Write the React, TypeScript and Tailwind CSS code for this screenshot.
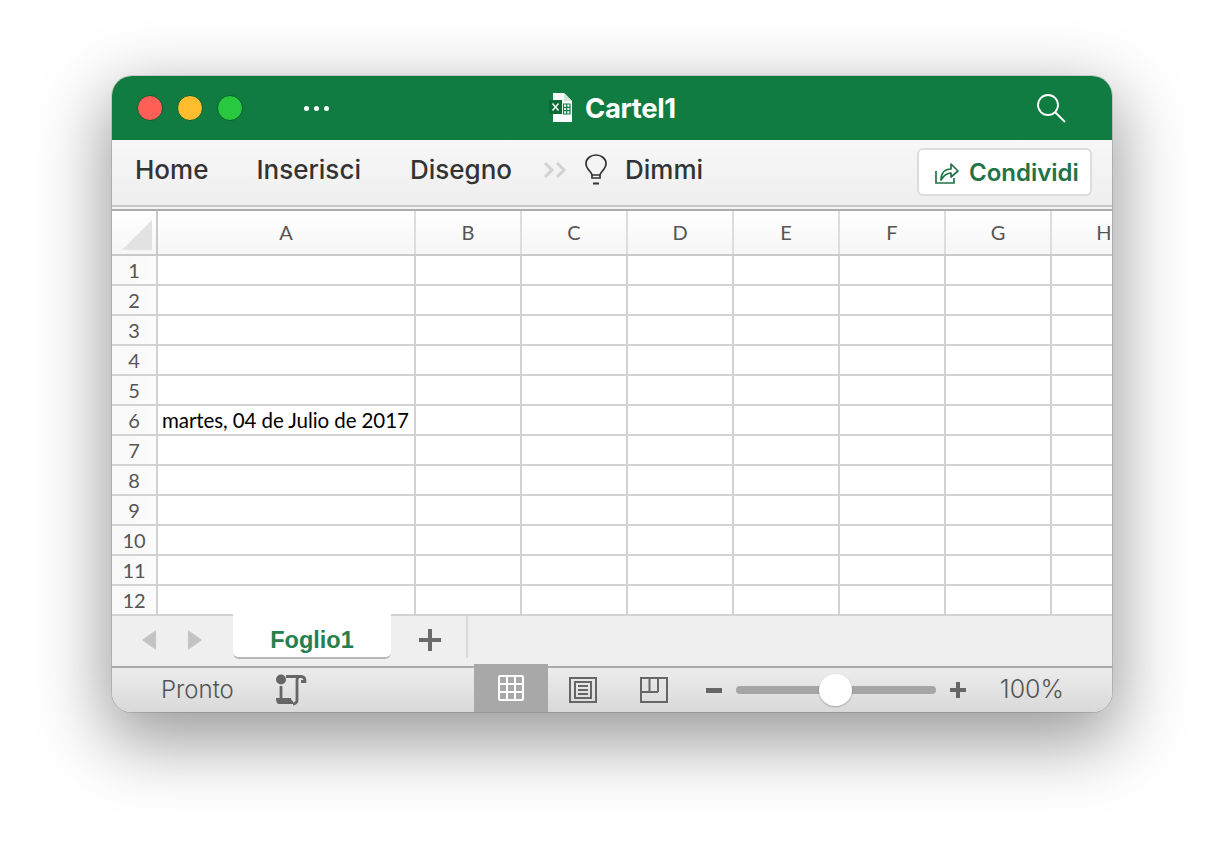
const columns = ['B', 'C', 'D', 'E', 'F', 'G', 'H']
const rows = [1, 2, 3, 4, 5, 6, 7, 8, 9, 10, 11, 12]

function ExcelDoc() {
  return (
    <svg width="26" height="32" viewBox="0 0 26 32">
      <path d="M5 1h11l8 8v21H5z" fill="#fff" />
      <path d="M16 1v8h8z" fill="#cfe3d8" />
      <rect x="1" y="8" width="13" height="14" fill="#0c6a37" />
      <path d="M4.500 11.500l6 7M10.500 11.500l-6 7" stroke="#fff" strokeWidth="1.400" />
      <path d="M15.500 12h6.500v10h-6.500zM15.500 15.300h6.500M15.500 18.600h6.500M18.700 12v10" fill="none" stroke="#107c41" strokeWidth="1.200" />
    </svg>
  )
}

function SearchIcon() {
  return (
    <svg width="30" height="30" viewBox="0 0 30 30" fill="none" stroke="#fff" strokeWidth="1.800">
      <circle cx="12" cy="12" r="10" />
      <path d="M19.500 19.500L28.500 28.500" strokeLinecap="round" />
    </svg>
  )
}

function Bulb() {
  return (
    <svg width="26" height="32" viewBox="0 0 26 32" fill="none" stroke="#333" strokeWidth="1.700">
      <path d="M9 24v-3c0-3-6-5.500-6-11.500a10 8.500 0 0 1 20 0c0 6-6 8.500-6 11.500v3z" />
      <path d="M9 21h8" />
      <path d="M10 29.500h6" strokeWidth="2" />
    </svg>
  )
}

function Chevrons() {
  return (
    <svg width="26" height="18" viewBox="0 0 26 18" fill="none" stroke="#d2d2d2" strokeWidth="3">
      <path d="M2 2l7 7-7 7M14 2l7 7-7 7" />
    </svg>
  )
}

function ShareIcon() {
  return (
    <svg width="26" height="26" viewBox="0 0 26 26" fill="none" stroke="#217346" strokeWidth="1.700">
      <path d="M2 12v12h18v-5" />
      <path d="M7 21c0-7 4-11 10-11V5l7 7-7 6v-4c-4 0-7 2-10 7z" strokeLinejoin="round" />
    </svg>
  )
}

function MacroIcon() {
  return (
    <svg width="32" height="32" viewBox="0 0 32 32" fill="none">
      <circle cx="6" cy="5.500" r="5" fill="#666" />
      <path d="M6 12v12" stroke="#666" strokeWidth="2.800" />
      <path d="M1 24h15c0 1 .5 3 2 3v3H4c-2 0-3-2-3-6z" fill="#666" />
      <path d="M11 2.500h15c2.500 0 4 1.500 4 5h-4M24.500 2.500c-1.500 0-2.500 2-2.500 4v20c0 2-2 3.500-4 3.500" stroke="#666" strokeWidth="2.800" />
    </svg>
  )
}

function GridView() {
  return (
    <svg width="26" height="26" viewBox="0 0 26 26" fill="none" stroke="#fff" strokeWidth="2">
      <rect x="1" y="1" width="24" height="24" rx="1" />
      <path d="M9 1v24M17 1v24M1 9h24M1 17h24" />
    </svg>
  )
}

function PageView() {
  return (
    <svg width="28" height="26" viewBox="0 0 28 26" fill="none" stroke="#666" strokeWidth="2">
      <rect x="1" y="1" width="26" height="24" />
      <rect x="6" y="5" width="16" height="16" />
      <path d="M9 9h10M9 13h10M9 17h10" />
    </svg>
  )
}

function BreakView() {
  return (
    <svg width="28" height="26" viewBox="0 0 28 26" fill="none" stroke="#666" strokeWidth="2">
      <rect x="1" y="1" width="26" height="24" />
      <path d="M1 15h17M9.500 1v14M18 1v14" />
    </svg>
  )
}

export default function App() {
  return (
    <div className="min-h-[860px] bg-white pt-[76px] pl-[112px]">
      <div className="flex h-[636px] w-[1000px] flex-col overflow-hidden rounded-[20px] bg-white font-['Inter',sans-serif] shadow-[0_0_0_1px_rgba(0,0,0,0.12),0_24px_70px_6px_rgba(0,0,0,0.4)]">
        {/* Title bar */}
        <div className="relative flex h-[64px] shrink-0 items-center bg-[#107c41] pl-[25px] pr-[46px]">
          <div className="flex gap-[14px]">
            <span className="h-[26px] w-[26px] rounded-full border border-[#0b5f31] bg-[#ff5f57]" />
            <span className="h-[26px] w-[26px] rounded-full border border-[#0b5f31] bg-[#febc2e]" />
            <span className="h-[26px] w-[26px] rounded-full border border-[#0b5f31] bg-[#28c840]" />
          </div>
          <div className="ml-[61px] flex gap-[5px]">
            <span className="h-[5px] w-[5px] rounded-full bg-white" />
            <span className="h-[5px] w-[5px] rounded-full bg-white" />
            <span className="h-[5px] w-[5px] rounded-full bg-white" />
          </div>
          <div className="ml-[219px] flex items-center gap-[11px]">
            <ExcelDoc />
            <span className="mt-[1px] text-[27.500px] font-bold tracking-[-0.4px] text-white">Cartel1</span>
          </div>
          <div className="ml-auto flex">
            <SearchIcon />
          </div>
        </div>

        {/* Toolbar */}
        <div className="flex h-[65px] shrink-0 items-center bg-gradient-to-b from-[#f7f7f7] to-[#eeeeee] pl-[23px] pr-[20px] text-[26px] font-medium text-[#333]">
          <span className="mb-[7px]">Home</span>
          <span className="mb-[7px] ml-[48px]">Inserisci</span>
          <span className="mb-[7px] ml-[49px]">Disegno</span>
          <span className="mb-[6px] ml-[31px] flex">
            <Chevrons />
          </span>
          <span className="mb-[6px] ml-[14px] flex">
            <Bulb />
          </span>
          <span className="mb-[7px] ml-[16px]">Dimmi</span>
          <button className="mb-[2px] ml-auto flex h-[48px] w-[175px] items-center rounded-[6px] border-2 border-[#dcdcdc] bg-white pl-[15px] text-[24px] font-semibold text-[#217346]">
            <ShareIcon />
            <span className="ml-[9px] mt-[2px]">Condividi</span>
          </button>
        </div>
        <div className="h-[2px] shrink-0 bg-[#c8c8c8]" />
        <div className="h-[2px] shrink-0 bg-[#f4f4f4]" />
        <div className="h-[2px] shrink-0 bg-[#acacac]" />

        {/* Sheet */}
        <div className="flex h-[405px] shrink-0 flex-col overflow-hidden font-['Lato',sans-serif]">
          <div className="flex h-[45px] shrink-0 border-b-2 border-[#c9c9c9] bg-gradient-to-b from-white to-[#f6f6f6] text-[20px] text-[#555]">
            <div className="flex h-full w-[46px] shrink-0 items-center justify-center border-r-2 border-[#c9c9c9]">
              <div className="mt-[5px] ml-[6px] h-[30px] w-[30px] bg-[#e2e2e2] [clip-path:polygon(100%_0,100%_100%,0_100%)]" />
            </div>
            <div className="flex h-full w-[258px] shrink-0 items-center justify-center border-r-2 border-[#dddddd] pb-[2px]">A</div>
            {columns.map((c) => (
              <div key={c} className="flex h-full w-[106px] shrink-0 items-center justify-center border-r-2 border-[#dddddd] pb-[2px]">
                {c}
              </div>
            ))}
          </div>
          {rows.map((r) => (
            <div key={r} className="flex h-[30px] shrink-0">
              <div className="flex h-full w-[46px] shrink-0 items-center justify-center border-r-2 border-b-2 border-[#d2d2d2] bg-gradient-to-r from-[#f8f8f8] to-[#fcfcfc] text-[20px] text-[#555]">
                {r}
              </div>
              <div className="flex h-full w-[258px] shrink-0 items-center overflow-hidden whitespace-nowrap border-r-2 border-b-2 border-[#d2d2d2] pl-[4px] text-[20.500px] tracking-[-0.08px] text-black">
                {r === 6 ? 'martes, 04 de Julio de 2017' : ''}
              </div>
              {columns.map((c) => (
                <div key={c} className="h-full w-[106px] shrink-0 border-r-2 border-b-2 border-[#d2d2d2]" />
              ))}
            </div>
          ))}
        </div>

        {/* Sheet tabs */}
        <div className="flex h-[50px] shrink-0 items-start bg-[#efefef]">
          <div className="flex h-[48px] w-[121px] shrink-0 items-center gap-[32px] pl-[30px]">
            <span className="h-0 w-0 border-y-[10px] border-r-[14px] border-y-transparent border-r-[#c4c4c4]" />
            <span className="h-0 w-0 border-y-[10px] border-l-[14px] border-y-transparent border-l-[#c4c4c4]" />
          </div>
          <div className="relative mt-[-2px] flex h-[45px] w-[158px] shrink-0 items-center justify-center rounded-b-[6px] border-b-2 border-[#b8b8b8] bg-white pt-[10px] font-['Liberation_Sans',sans-serif] text-[23.500px] font-bold text-[#24804f]">
            Foglio1
          </div>
          <div className="flex h-[48px] w-[75px] shrink-0 items-center justify-center pl-[2px]">
            <svg width="22" height="22" viewBox="0 0 22 22" fill="#6a6a6a">
              <path d="M9 0h4v9h9v4h-9v9H9v-9H0V9h9z" />
            </svg>
          </div>
          <span className="h-[42px] w-[2px] shrink-0 bg-[#d8d8d8]" />
        </div>

        {/* Status bar */}
        <div className="relative flex h-[46px] shrink-0 items-center border-t-2 border-[#aaaaaa] bg-gradient-to-b from-[#ececec] to-[#d9d9d9] pl-[49px] text-[24px] font-light text-[#555]">
          <span>Pronto</span>
          <span className="ml-[41px] flex">
            <MacroIcon />
          </span>
          <div className="absolute top-[-4px] left-[362px] flex h-[48px] w-[74px] items-center justify-center bg-[#a8a8a8]">
            <GridView />
          </div>
          <span className="ml-[262px] flex">
            <PageView />
          </span>
          <span className="ml-[43px] flex">
            <BreakView />
          </span>
          <span className="ml-[38px] h-[5px] w-[16px] bg-[#666]" />
          <div className="relative ml-[14px] h-[8px] w-[200px] rounded-full bg-[#a6a6a6]">
            <span className="absolute top-[-12px] left-[83px] h-[32px] w-[33px] rounded-full bg-white shadow-[0_1px_2px_rgba(0,0,0,0.25)]" />
          </div>
          <svg className="ml-[14px]" width="16" height="16" viewBox="0 0 16 16" fill="#666">
            <path d="M6 0h4v6h6v4h-6v6H6v-6H0V6h6z" />
          </svg>
          <span className="ml-[34px] text-[25px]">100%</span>
        </div>
      </div>
    </div>
  )
}
